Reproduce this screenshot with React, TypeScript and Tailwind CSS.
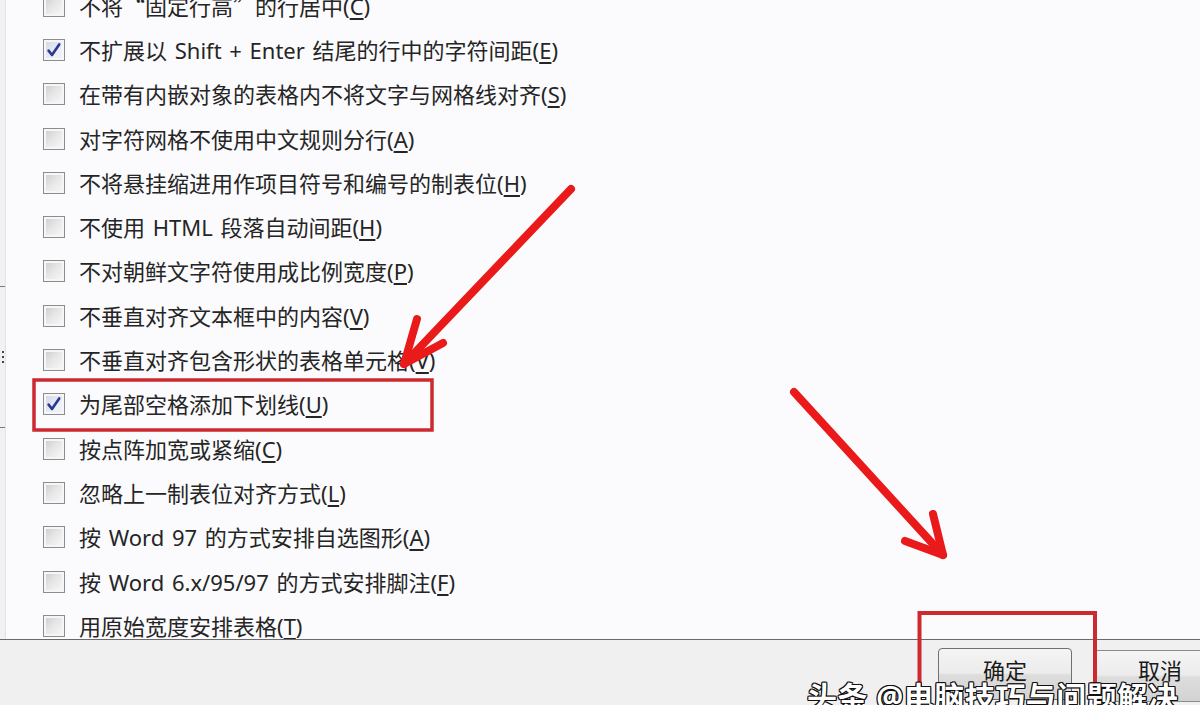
import React from "react";

type Row = { label: React.ReactNode; key: string; checked?: boolean };

const Q = ({ c }: { c: string }) => <span className="font-['Noto_Sans_CJK_SC',sans-serif]">{c}</span>;

const rows: Row[] = [
  { label: <>不将<Q c="“" />固定行高<Q c="”" />的行居中</>, key: "C" },
  { label: "不扩展以 Shift + Enter 结尾的行中的字符间距", key: "E", checked: true },
  { label: "在带有内嵌对象的表格内不将文字与网格线对齐", key: "S" },
  { label: "对字符网格不使用中文规则分行", key: "A" },
  { label: "不将悬挂缩进用作项目符号和编号的制表位", key: "H" },
  { label: "不使用 HTML 段落自动间距", key: "H" },
  { label: "不对朝鲜文字符使用成比例宽度", key: "P" },
  { label: "不垂直对齐文本框中的内容", key: "V" },
  { label: "不垂直对齐包含形状的表格单元格", key: "V" },
  { label: "为尾部空格添加下划线", key: "U", checked: true },
  { label: "按点阵加宽或紧缩", key: "C" },
  { label: "忽略上一制表位对齐方式", key: "L" },
  { label: "按 Word 97 的方式安排自选图形", key: "A" },
  { label: "按 Word 6.x/95/97 的方式安排脚注", key: "F" },
  { label: "用原始宽度安排表格", key: "T" },
];

function Box({ checked }: { checked?: boolean }) {
  return (
    <div className="w-[22px] h-[22px] shrink-0 border border-[#8c8d8f] bg-[#f6f6f6] p-[2px]">
      {checked ? (
        <div className="w-full h-full bg-[linear-gradient(135deg,#d5d8ea,#eef0f8_70%)] flex items-center justify-center">
          <svg width="16" height="16" viewBox="0 0 16 16">
            <path d="M2.6 8.6 L6 13 L13.2 2.4" fill="none" stroke="#2a3a90" strokeWidth="2.6" strokeLinecap="round" strokeLinejoin="round" />
          </svg>
        </div>
      ) : (
        <div className="w-full h-full bg-[linear-gradient(135deg,#d0d0d0,#e6e6e6_45%,#f6f6f6)]" />
      )}
    </div>
  );
}

export default function App() {
  return (
    <div className="relative w-[1200px] h-[705px] overflow-hidden bg-[#fbfbfd] flex flex-col font-['Noto_Sans','Noto_Sans_CJK_SC',sans-serif]">
      <div className="h-[639px] flex overflow-hidden">
        <div className="w-[6px] shrink-0 bg-[#f1f1f3] border-r border-[#e2e2e4] flex flex-col">
          <div className="h-[286px]" />
          <div className="h-[1px] bg-[#7a7a7a]" />
          <div className="h-[64px]" />
          <div className="flex flex-col items-end gap-[3px] pr-[1px]">
            <div className="w-[2px] h-[2px] bg-[#444]" />
            <div className="w-[2px] h-[2px] bg-[#444]" />
            <div className="w-[2px] h-[2px] bg-[#444]" />
          </div>
          <div className="h-[64px]" />
          <div className="h-[1px] bg-[#7a7a7a]" />
        </div>
        <div className="flex-1 overflow-hidden">
          <div className="-mt-[16.5px] pl-[37px] flex flex-col">
            {rows.map((r, i) => (
              <div key={i} className="h-[44.3px] shrink-0 flex items-center">
                <Box checked={r.checked} />
                <span className="ml-[14px] text-[22px] leading-none text-[#252525] whitespace-nowrap [word-spacing:2px]">
                  {r.label}(<span className="underline underline-offset-[3px]">{r.key}</span>)
                </span>
              </div>
            ))}
          </div>
        </div>
      </div>
      <div className="h-[1px] bg-[#6a6a6a]" />
      <div className="flex-1 bg-[#f0f0f0] flex items-start justify-end">
        <div className="mt-[8px] w-[134px] h-[52px] rounded-[4px] border border-[#707070] bg-[linear-gradient(#f4f4f4_0%,#ececec_48%,#dddddd_52%,#d3d3d3_100%)] flex items-start justify-center pt-[10px]">
          <span className="text-[22px] leading-none text-[#1a1a1a]">确定</span>
        </div>
        <div className="mt-[10px] ml-[21px] mr-[-27px] w-[134px] h-[52px] rounded-[4px] border border-[#8a8a8a] bg-[linear-gradient(#f4f4f4_0%,#ececec_48%,#dddddd_52%,#d3d3d3_100%)] flex items-start justify-center pt-[8px]">
          <span className="text-[22px] leading-none text-[#1a1a1a]">取消</span>
        </div>
      </div>

      <svg className="absolute inset-0 pointer-events-none" width="1200" height="705" viewBox="0 0 1200 705">
        <rect x="34" y="380" width="398" height="50" fill="none" stroke="#cc2a2f" strokeWidth="3.5" />
        <rect x="919.5" y="613" width="175.5" height="120" fill="none" stroke="#cc2a2f" strokeWidth="4" />
        <g fill="none" stroke="#ea1a1a" strokeWidth="8" strokeLinecap="round" strokeLinejoin="round">
          <path d="M571 189 L404 364" />
          <path d="M417 319 L404 364 L443 343" />
          <path d="M794 392 L943 555" />
          <path d="M933 514 L943 555 L905 541" />
        </g>
      </svg>

      <div className="absolute left-[807px] top-[682px] text-[30px] leading-none font-bold text-white whitespace-nowrap tracking-[0.5px] [text-shadow:1px_1px_0_#111,-1px_-1px_0_#111,1px_-1px_0_#111,-1px_1px_0_#111,0_1px_0_#111,0_-1px_0_#111,1px_0_0_#111,-1px_0_0_#111]">
        头条 @电脑技巧与问题解决
      </div>
    </div>
  );
}
